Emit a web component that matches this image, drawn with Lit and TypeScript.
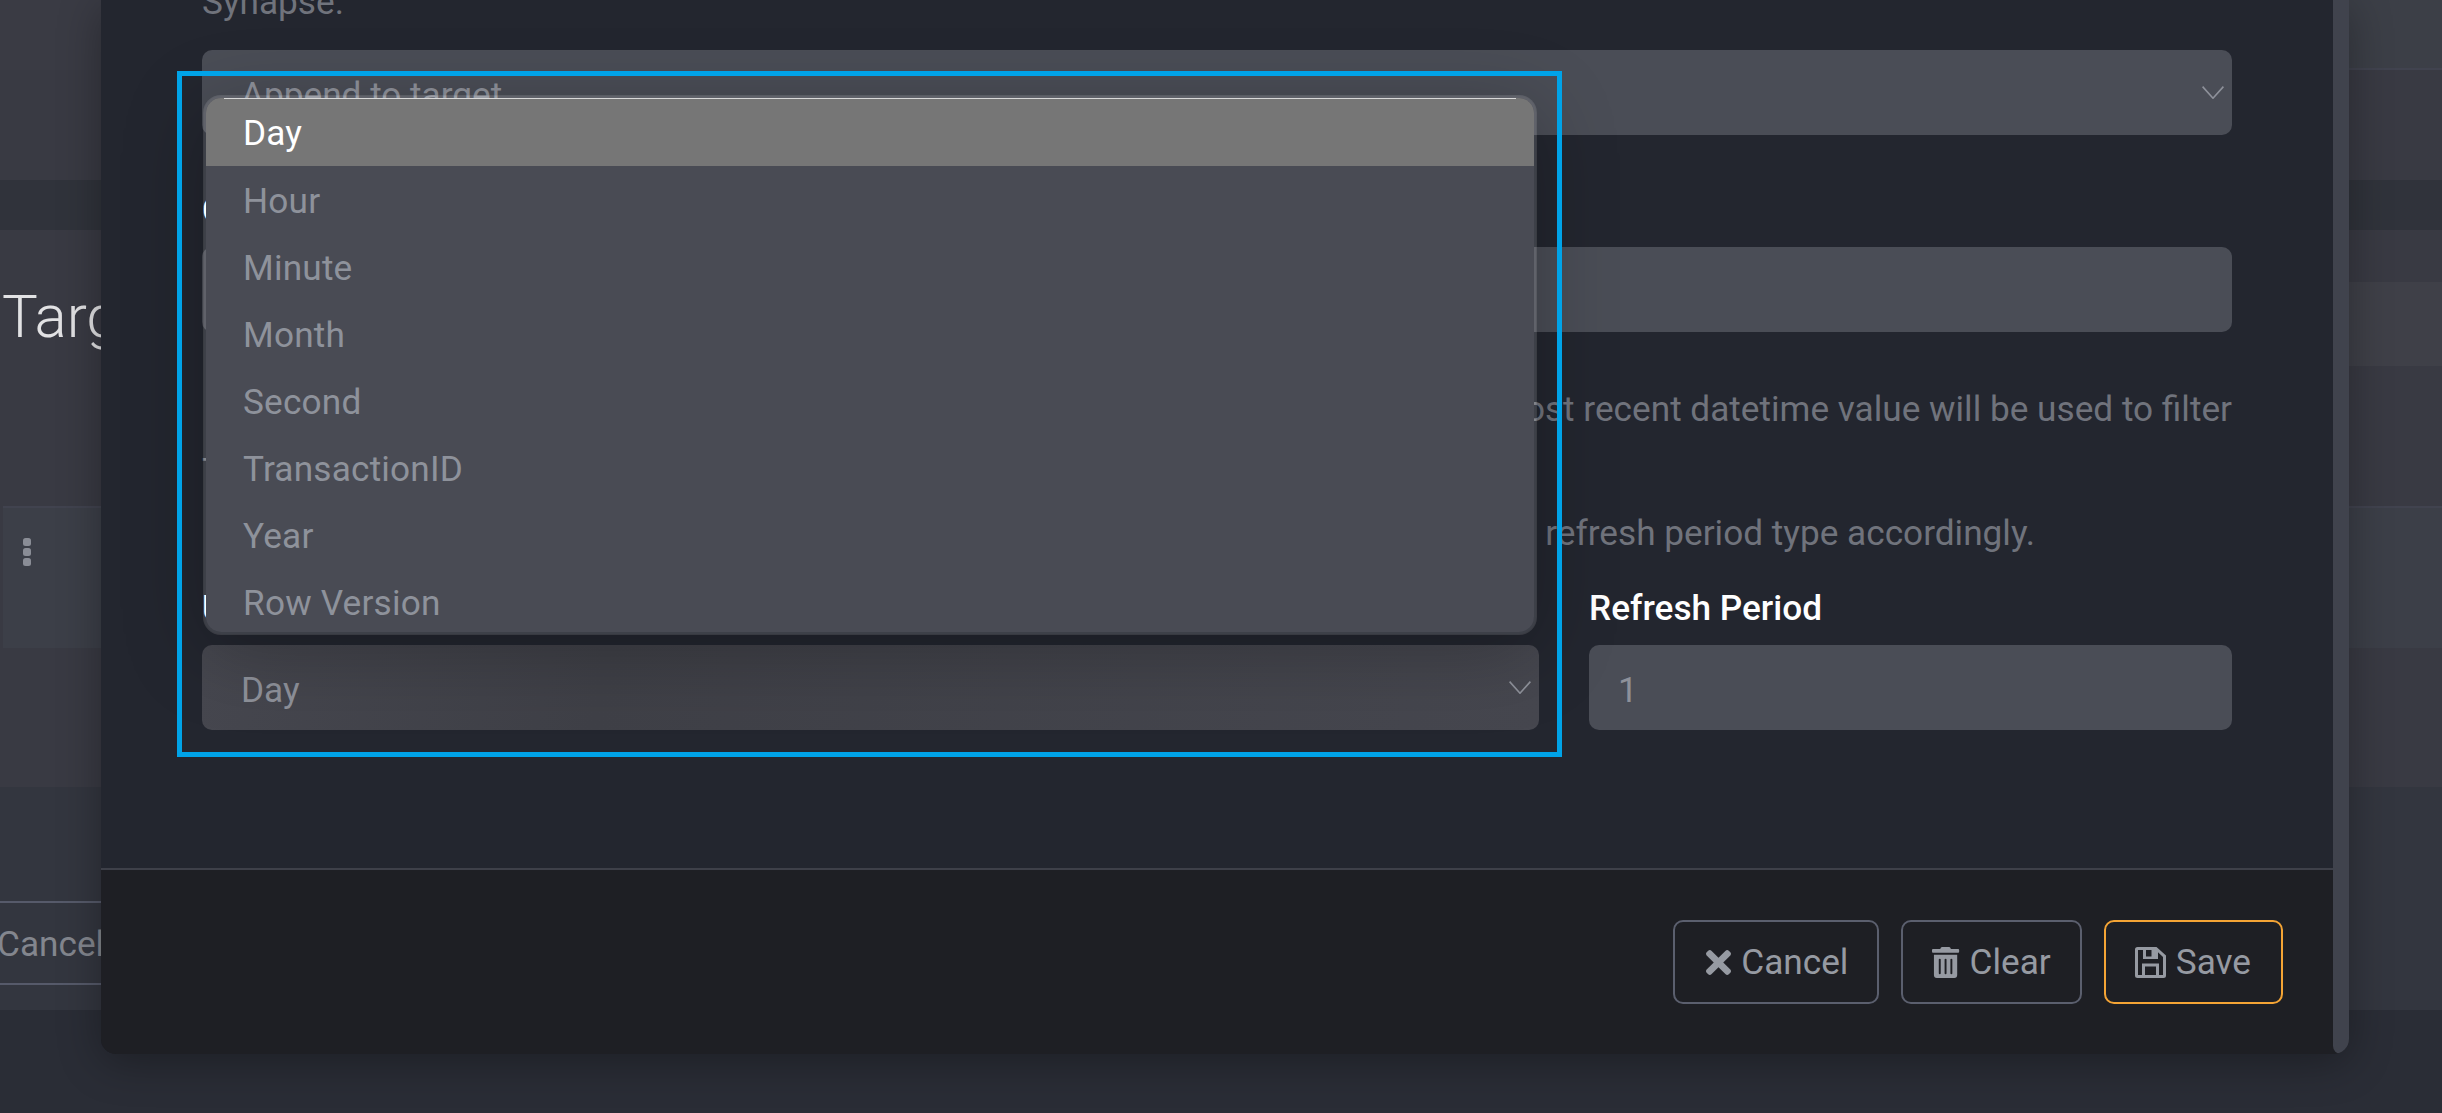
import { LitElement, html, css } from "lit";
import { customElement } from "lit/decorators.js";

const options = ["Day", "Hour", "Minute", "Month", "Second", "TransactionID", "Year", "Row Version"];

const chevron = html`<svg class="chev" viewBox="0 0 22 13" aria-hidden="true"><path d="M.6.6 11 12.2 21.4.6" fill="none" stroke="currentColor" stroke-width="1.6"/></svg>`;

@customElement("app-root")
export class AppRoot extends LitElement {
  static styles = css`
    :host {
      display: block;
      position: relative;
      width: 2442px;
      height: 1113px;
      overflow: hidden;
      background: #393a43;
      font-family: Roboto, "Liberation Sans", sans-serif;
      font-size: 35.2px;
      color: #8e919a;
    }
    /* page behind the modal */
    .page { display: flex; flex-direction: column; height: 1113px; }
    .band { box-sizing: border-box; flex: none; }
    .b1 { height: 68px; background: linear-gradient(90deg, #3a3b44 0 50%, #3c3f47 50%); }
    .b2 { height: 112px; background: #393a43; border-top: 2px solid; border-image: linear-gradient(90deg, #3a3b44 0 50%, #41434f 50%) 1; }
    .b3 { height: 50px; background: #30333b; }
    .b4 { height: 52px; background: #393a43; }
    .b5 { height: 84px; background: linear-gradient(90deg, #393a43 0 50%, #3f4048 50%); }
    .b6 { height: 140px; background: #393a43; }
    .b7 { height: 142px; margin-left: 3px; background: #3c3f48; border-top: 2px solid #41434f; padding: 30px 0 0 20px; }
    .b8 { height: 139px; background: #393a43; }
    .b9 { height: 223px; background: #33363f; padding-top: 114px; }
    .b10 { height: 103px; background: #2a2d36; }
    .title { font-size: 60px; font-weight: 300; line-height: 70px; color: #e2e2e4; padding-left: 2px; white-space: nowrap; }
    .kebab { display: block; width: 8px; height: 28px; color: #8a8d96; }
    .ghost {
      box-sizing: border-box;
      width: 300px;
      height: 84px;
      margin-left: -3px;
      border-top: 2px solid #565a6a;
      border-bottom: 2px solid #565a6a;
      line-height: 82px;
      color: #83868e;
    }

    /* modal */
    .modal {
      position: absolute;
      left: 101px;
      top: 0;
      width: 2248px;
      height: 1054px;
      display: flex;
      border-radius: 0 0 15px 15px;
      box-shadow: 0 8px 44px rgba(0, 0, 0, 0.32);
      overflow: hidden;
      background: #1e1f24;
    }
    .col { flex: 1; min-width: 0; display: flex; flex-direction: column; }
    .scrollbar { width: 16px; flex: none; background: #40434d; border-radius: 0 0 8px 8px; }
    .body {
      box-sizing: border-box;
      height: 868px;
      flex: none;
      padding: 0 101px;
      background: #23262f;
      overflow: hidden;
      display: flex;
      flex-direction: column;
    }
    .help { line-height: 62px; color: #70737c; white-space: nowrap; flex: none; }
    .first { margin-top: -29px; }
    .right { text-align: right; }
    .help3 { width: 1833px; text-align: right; white-space: pre; }
    .label { display: block; line-height: 50px; height: 50px; color: #fff; font-weight: 500; flex: none; white-space: nowrap; }
    .field {
      box-sizing: border-box;
      height: 85px;
      flex: none;
      border-radius: 10px;
      background: #4a4d56;
      display: flex;
      align-items: center;
      justify-content: space-between;
      padding: 0 8px 0 39px;
      color: #8e919a;
    }
    .field > span { padding-top: 5px; }
    .chev { width: 22px; height: 13px; flex: none; }
    .m16 { margin-top: 17px; }
    .m12 { margin-top: 12px; }
    .m50 { margin-top: 50px; }
    .m46 { margin-top: 46px; }
    .m19 { margin-top: 19px; }
    .row { display: flex; gap: 50px; }
    .left { width: 1337px; flex: none; }
    .grow { flex: 1; min-width: 0; }
    .dim { background: linear-gradient(100deg, #46474f, #3f4047 30%, #46474f); color: #8e919a; }
    .num { padding-left: 29px; }
    .footer {
      flex: 1;
      box-sizing: border-box;
      border-top: 2px solid #3e4049;
      background: #1e1f24;
      display: flex;
      justify-content: flex-end;
      align-items: flex-start;
      gap: 22px;
      padding: 50px 50px 0 0;
    }
    button {
      box-sizing: border-box;
      height: 84px;
      padding: 0 29px;
      display: flex;
      align-items: center;
      gap: 10px;
      background: transparent;
      border: 2px solid #5b5f6e;
      border-radius: 10px;
      font: inherit;
      color: #969aa2;
    }
    button.cancel { padding: 0 29px 0 31px; }
    button.save { border-color: #f4a435; padding: 0 30px 0 29px; }
    button svg { height: 31px; fill: currentColor; flex: none; }
    button svg.x { height: 25px; width: 25px; }

    /* open dropdown */
    .menu {
      position: absolute;
      left: 203px;
      top: 95px;
      width: 1334px;
      height: 540px;
      box-sizing: border-box;
      border: 3px solid rgba(255, 255, 255, 0.12);
      border-radius: 18px;
      background: #494b54;
      background-clip: padding-box;
      overflow: hidden;
      box-shadow: 0 16px 80px rgba(0, 0, 0, 0.26);
    }
    .opt { position: relative; box-sizing: border-box; height: 67px; padding-left: 37px; line-height: 70px; color: #8e929b; letter-spacing: 0.2px; }
    .opt.on { height: 68px; line-height: 71px; background: #767676; color: #fff; font-weight: 400; }
    .opt.on::before {
      content: "";
      position: absolute;
      left: 18px;
      right: 18px;
      top: 0;
      height: 1px;
      background: #d8d8d8;
    }

    /* annotation frame */
    .frame {
      position: absolute;
      left: 177px;
      top: 71px;
      width: 1385px;
      height: 686px;
      box-sizing: border-box;
      border: 5px solid #00a3e8;
    }
  `;

  render() {
    return html`
      <div class="page">
        <div class="band b1"></div>
        <div class="band b2"></div>
        <div class="band b3"></div>
        <div class="band b4"></div>
        <div class="band b5"><div class="title">Target</div></div>
        <div class="band b6"></div>
        <div class="band b7">
          <svg class="kebab" viewBox="0 0 8 28" aria-hidden="true" fill="currentColor">
            <rect width="8" height="8" y="0" rx="2.5" />
            <rect width="8" height="8" y="10" rx="2.5" />
            <rect width="8" height="8" y="20" rx="2.5" />
          </svg>
        </div>
        <div class="band b8"></div>
        <div class="band b9"><div class="ghost">Cancel</div></div>
        <div class="band b10"></div>
      </div>

      <div class="modal">
        <div class="col">
          <div class="body">
            <div class="help first">Synapse.</div>
            <div class="field m16"><span>Append to target</span>${chevron}</div>
            <div class="label m50">Column</div>
            <div class="field m12"></div>
            <div class="help m46 right">Choose the column that holds the watermark of the load. On each run the most recent datetime value will be used to filter</div>
            <div class="help">The source rows, so that only new data is loaded.</div>
            <div class="help help3">Select a watermark column of the matching data type and set the  refresh period type accordingly.</div>
            <div class="row m19">
              <div class="left">
                <div class="label">Update Period Type</div>
                <div class="field m12 dim"><span>Day</span>${chevron}</div>
              </div>
              <div class="grow">
                <div class="label">Refresh Period</div>
                <div class="field m12 num"><span>1</span></div>
              </div>
            </div>
          </div>
          <div class="footer">
            <button class="cancel">
              <svg class="x" viewBox="0 80 352 352" aria-hidden="true"><path d="M242.72 256l100.07-100.07c12.28-12.28 12.28-32.19 0-44.48l-22.24-22.24c-12.28-12.28-32.19-12.28-44.48 0L176 189.28 75.93 89.21c-12.28-12.28-32.19-12.28-44.48 0L9.21 111.45c-12.28 12.28-12.28 32.19 0 44.48L109.28 256 9.21 356.07c-12.28 12.28-12.28 32.19 0 44.48l22.24 22.24c12.28 12.28 32.2 12.28 44.48 0L176 322.72l100.07 100.07c12.28 12.28 32.2 12.28 44.48 0l22.24-22.24c12.28-12.28 12.28-32.19 0-44.48L242.72 256z"/></svg>
              Cancel
            </button>
            <button>
              <svg viewBox="0 0 448 512" aria-hidden="true"><path d="M32 464a48 48 0 0 0 48 48h288a48 48 0 0 0 48-48V128H32zm272-256a16 16 0 0 1 32 0v224a16 16 0 0 1-32 0zm-96 0a16 16 0 0 1 32 0v224a16 16 0 0 1-32 0zm-96 0a16 16 0 0 1 32 0v224a16 16 0 0 1-32 0zM432 32H312l-9.4-18.7A24 24 0 0 0 281.1 0H166.8a23.72 23.72 0 0 0-21.4 13.3L136 32H16A16 16 0 0 0 0 48v32a16 16 0 0 0 16 16h416a16 16 0 0 0 16-16V48a16 16 0 0 0-16-16z"/></svg>
              Clear
            </button>
            <button class="save">
              <svg viewBox="0 0 31 31" aria-hidden="true"><path fill-rule="evenodd" d="M2.5 0H21.5L31 8.5V28.5A2.5 2.5 0 0 1 28.5 31H2.5A2.5 2.5 0 0 1 0 28.5V2.5A2.5 2.5 0 0 1 2.5 0ZM3 3V28H7V16.5H24V28H28V10L23 5.3V12H8V3ZM11 3V9.5H16.5V3ZM10 19.5V28H21V19.5Z"/></svg>
              Save
            </button>
          </div>
        </div>
        <div class="scrollbar"></div>
      </div>

      <div class="menu">
        ${options.map((o, i) => html`<div class="opt ${i === 0 ? "on" : ""}">${o}</div>`)}
      </div>
      <div class="frame"></div>
    `;
  }
}
